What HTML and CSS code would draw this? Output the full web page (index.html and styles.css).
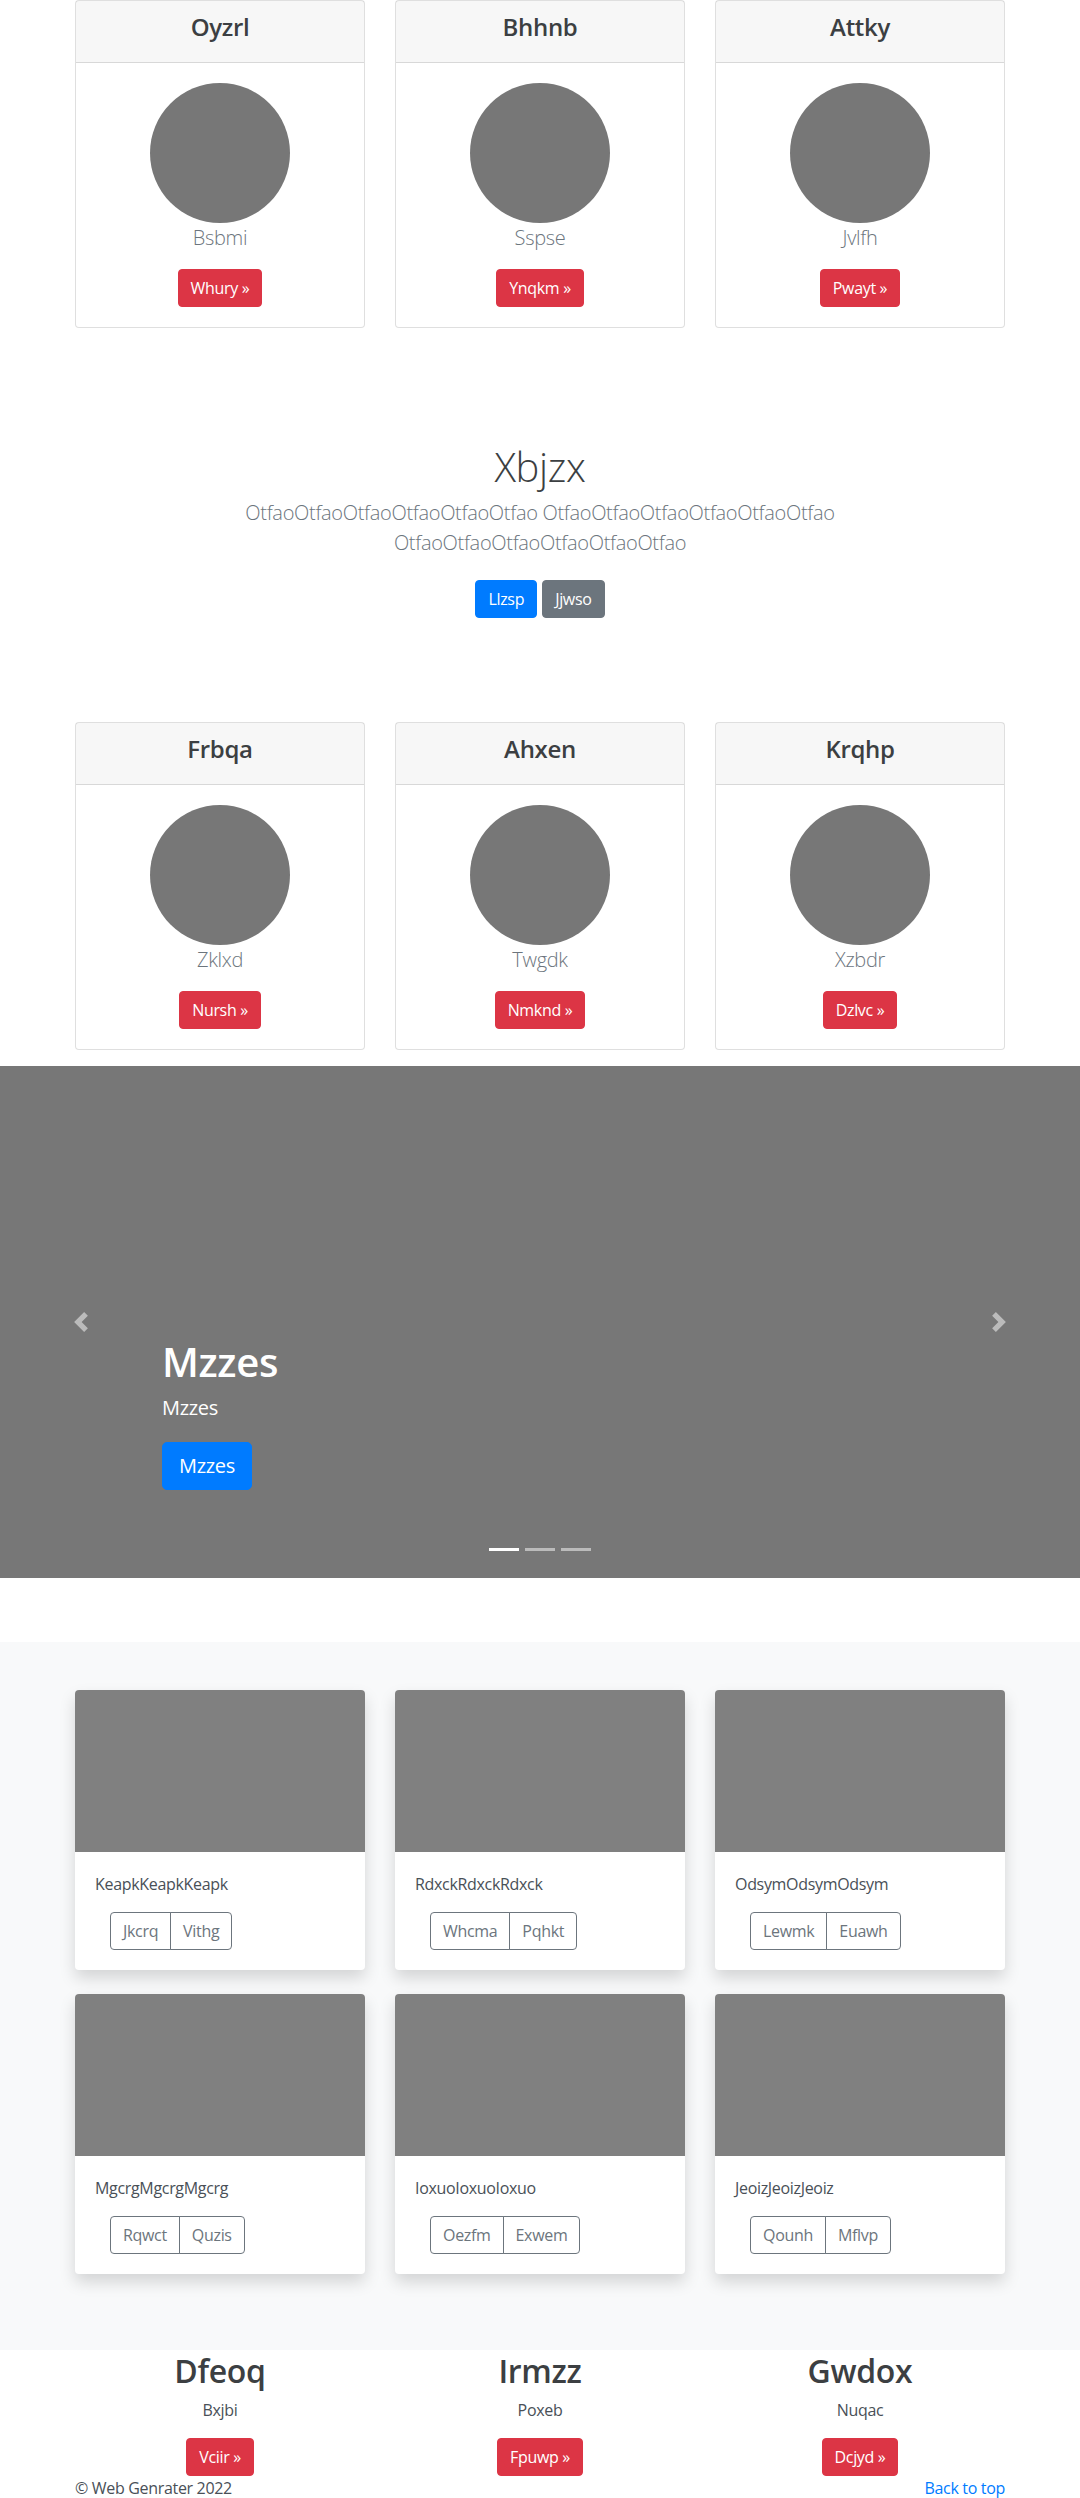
FILE: index.html
```html
<!DOCTYPE html>
<html lang="en">
<head>
    <meta charset="UTF-8">
    <meta name="viewport" content="width=device-width, initial-scale=1.0">
    <title>Web Genrater</title>
    <link rel="stylesheet" href="styles.css">
</head>
<body>
    <div class="container">
        <div class="row">
            <div class="card">
                <div class="card-header"><h4>Oyzrl</h4></div>
                <div class="card-body">
                    <div class="avatar"></div>
                    <p class="lead">Bsbmi</p>
                    <a href="#" class="btn btn-danger">Whury &raquo;</a>
                </div>
            </div>
            <div class="card">
                <div class="card-header"><h4>Bhhnb</h4></div>
                <div class="card-body">
                    <div class="avatar"></div>
                    <p class="lead">Sspse</p>
                    <a href="#" class="btn btn-danger">Ynqkm &raquo;</a>
                </div>
            </div>
            <div class="card">
                <div class="card-header"><h4>Attky</h4></div>
                <div class="card-body">
                    <div class="avatar"></div>
                    <p class="lead">Jvlfh</p>
                    <a href="#" class="btn btn-danger">Pwayt &raquo;</a>
                </div>
            </div>
        </div>
    </div>

    <section class="jumbotron">
        <div class="jumbotron-inner">
            <h1>Xbjzx</h1>
            <p class="lead">OtfaoOtfaoOtfaoOtfaoOtfaoOtfao OtfaoOtfaoOtfaoOtfaoOtfaoOtfao OtfaoOtfaoOtfaoOtfaoOtfaoOtfao</p>
            <p class="actions">
                <a href="#" class="btn btn-primary">Llzsp</a>
                <a href="#" class="btn btn-secondary">Jjwso</a>
            </p>
        </div>
    </section>

    <div class="container">
        <div class="row">
            <div class="card">
                <div class="card-header"><h4>Frbqa</h4></div>
                <div class="card-body">
                    <div class="avatar"></div>
                    <p class="lead">Zklxd</p>
                    <a href="#" class="btn btn-danger">Nursh &raquo;</a>
                </div>
            </div>
            <div class="card">
                <div class="card-header"><h4>Ahxen</h4></div>
                <div class="card-body">
                    <div class="avatar"></div>
                    <p class="lead">Twgdk</p>
                    <a href="#" class="btn btn-danger">Nmknd &raquo;</a>
                </div>
            </div>
            <div class="card">
                <div class="card-header"><h4>Krqhp</h4></div>
                <div class="card-body">
                    <div class="avatar"></div>
                    <p class="lead">Xzbdr</p>
                    <a href="#" class="btn btn-danger">Dzlvc &raquo;</a>
                </div>
            </div>
        </div>
    </div>

    <div class="carousel">
        <a href="#" class="carousel-control prev">
            <svg width="20" height="20" viewBox="0 0 8 8"><path fill="#fff" d="M5.25 0l-4 4 4 4 1.5-1.5L4.25 4l2.5-2.5L5.25 0z"/></svg>
        </a>
        <div class="carousel-caption">
            <h1>Mzzes</h1>
            <p>Mzzes</p>
            <a href="#" class="btn btn-primary btn-lg">Mzzes</a>
        </div>
        <a href="#" class="carousel-control next">
            <svg width="20" height="20" viewBox="0 0 8 8"><path fill="#fff" d="M2.75 0l-1.5 1.5L3.75 4l-2.5 2.5L2.75 8l4-4-4-4z"/></svg>
        </a>
        <ol class="carousel-indicators">
            <li class="active"></li>
            <li></li>
            <li></li>
        </ol>
    </div>

    <div class="album">
        <div class="container">
            <div class="row">
                <div class="album-card">
                    <div class="thumb"></div>
                    <div class="album-body">
                        <p>KeapkKeapkKeapk</p>
                        <div class="btn-group">
                            <a href="#" class="btn btn-outline">Jkcrq</a>
                            <a href="#" class="btn btn-outline">Vithg</a>
                        </div>
                    </div>
                </div>
                <div class="album-card">
                    <div class="thumb"></div>
                    <div class="album-body">
                        <p>RdxckRdxckRdxck</p>
                        <div class="btn-group">
                            <a href="#" class="btn btn-outline">Whcma</a>
                            <a href="#" class="btn btn-outline">Pqhkt</a>
                        </div>
                    </div>
                </div>
                <div class="album-card">
                    <div class="thumb"></div>
                    <div class="album-body">
                        <p>OdsymOdsymOdsym</p>
                        <div class="btn-group">
                            <a href="#" class="btn btn-outline">Lewmk</a>
                            <a href="#" class="btn btn-outline">Euawh</a>
                        </div>
                    </div>
                </div>
                <div class="album-card">
                    <div class="thumb"></div>
                    <div class="album-body">
                        <p>MgcrgMgcrgMgcrg</p>
                        <div class="btn-group">
                            <a href="#" class="btn btn-outline">Rqwct</a>
                            <a href="#" class="btn btn-outline">Quzis</a>
                        </div>
                    </div>
                </div>
                <div class="album-card">
                    <div class="thumb"></div>
                    <div class="album-body">
                        <p>IoxuoIoxuoIoxuo</p>
                        <div class="btn-group">
                            <a href="#" class="btn btn-outline">Oezfm</a>
                            <a href="#" class="btn btn-outline">Exwem</a>
                        </div>
                    </div>
                </div>
                <div class="album-card">
                    <div class="thumb"></div>
                    <div class="album-body">
                        <p>JeoizJeoizJeoiz</p>
                        <div class="btn-group">
                            <a href="#" class="btn btn-outline">Qounh</a>
                            <a href="#" class="btn btn-outline">Mflvp</a>
                        </div>
                    </div>
                </div>
            </div>
        </div>
    </div>

    <div class="container">
        <div class="row">
            <div class="feature">
                <h2>Dfeoq</h2>
                <p>Bxjbi</p>
                <p class="feature-link"><a href="#" class="btn btn-danger">Vciir &raquo;</a></p>
            </div>
            <div class="feature">
                <h2>Irmzz</h2>
                <p>Poxeb</p>
                <p class="feature-link"><a href="#" class="btn btn-danger">Fpuwp &raquo;</a></p>
            </div>
            <div class="feature">
                <h2>Gwdox</h2>
                <p>Nuqac</p>
                <p class="feature-link"><a href="#" class="btn btn-danger">Dcjyd &raquo;</a></p>
            </div>
        </div>
    </div>

    <footer class="container footer">
        <p>&copy; Web Genrater 2022</p>
        <p><a href="#">Back to top</a></p>
    </footer>
</body>
</html>
```

FILE: styles.css
```css
* {
    box-sizing: border-box;
}

body {
    margin: 0;
    font-family: "Segoe UI", "Open Sans", Arial, sans-serif;
    font-size: 16px;
    line-height: 1.5;
    letter-spacing: -0.02em;
    color: #212529;
    background: #fff;
}

a {
    color: #007bff;
    text-decoration: none;
}

.container {
    width: 960px;
    margin: 0 auto;
    padding: 0 15px;
}

.row {
    display: grid;
    grid-template-columns: repeat(3, 1fr);
    column-gap: 30px;
}

/* buttons */
.btn {
    display: inline-block;
    padding: 6px 12px;
    font-size: 16px;
    line-height: 24px;
    border: 1px solid transparent;
    border-radius: 4px;
    color: #fff;
}

.btn-danger {
    background: #dc3545;
    border-color: #dc3545;
}

.btn-primary {
    background: #007bff;
    border-color: #007bff;
}

.btn-secondary {
    background: #6c757d;
    border-color: #6c757d;
}

.btn-lg {
    padding: 8px 16px;
    font-size: 20px;
    line-height: 30px;
    border-radius: 5px;
}

.btn-outline {
    color: #6c757d;
    border-color: #6c757d;
    background: transparent;
}

/* profile cards */
.card {
    border: 1px solid rgba(0, 0, 0, .125);
    border-radius: 4px;
    text-align: center;
    background: #fff;
}

.card-header {
    padding: 12px 20px;
    background: rgba(0, 0, 0, .03);
    border-bottom: 1px solid rgba(0, 0, 0, .125);
}

.card-header h4 {
    margin: 0 0 8px;
    font-size: 24px;
    font-weight: 600;
    line-height: 1.2;
    color: #3c3f42;
}

.card-body {
    padding: 20px;
}

.avatar {
    width: 140px;
    height: 140px;
    margin: 0 auto;
    border-radius: 50%;
    background: #777;
}

.lead {
    margin: 0 0 16px;
    font-size: 20px;
    font-weight: 300;
    line-height: 30px;
    color: #6c757d;
}

/* jumbotron */
.jumbotron {
    padding: 115px 0 104px;
    text-align: center;
}

.jumbotron-inner {
    max-width: 640px;
    margin: 0 auto;
    padding: 0 15px;
}

.jumbotron h1 {
    margin: 0 0 7px;
    font-size: 40px;
    font-weight: 300;
    line-height: 48px;
    color: #3c3f42;
}

.actions {
    display: flex;
    justify-content: center;
    gap: 5px;
    margin: 22px 0 0;
}

/* carousel */
.carousel {
    position: relative;
    height: 512px;
    margin: 16px 0 64px;
    background: #777;
}

.carousel-control {
    position: absolute;
    top: 0;
    bottom: 0;
    width: 15%;
    display: flex;
    align-items: center;
    justify-content: center;
    opacity: .5;
}

.carousel-control.prev {
    left: 0;
}

.carousel-control.next {
    right: 0;
}

.carousel-caption {
    position: absolute;
    left: 15%;
    right: 15%;
    bottom: 88px;
    color: #fff;
}

.carousel-caption h1 {
    margin: 0 0 7px;
    font-size: 40px;
    font-weight: 600;
    line-height: 48px;
}

.carousel-caption p {
    margin: 0 0 19px;
    font-size: 20px;
    line-height: 30px;
}

.carousel-indicators {
    position: absolute;
    left: 0;
    right: 0;
    bottom: 27px;
    display: flex;
    justify-content: center;
    margin: 0;
    padding: 0;
    list-style: none;
}

.carousel-indicators li {
    width: 30px;
    height: 3px;
    margin: 0 3px;
    background: #fff;
    opacity: .5;
}

.carousel-indicators li.active {
    opacity: 1;
}

/* album */
.album {
    padding: 48px 0 52px;
    background: #f8f9fa;
}

.album-card {
    margin-bottom: 24px;
    background: #fff;
    border-radius: 4px;
    overflow: hidden;
    box-shadow: 0 8px 16px rgba(0, 0, 0, .15);
}

.thumb {
    height: 162px;
    background: #808080;
}

.album-body {
    padding: 20px;
}

.album-body p {
    margin: 0 0 16px;
    color: #495057;
}

.btn-group {
    display: inline-flex;
    margin-left: 15px;
}

.btn-group .btn:first-child {
    border-top-right-radius: 0;
    border-bottom-right-radius: 0;
}

.btn-group .btn + .btn {
    margin-left: -1px;
    border-top-left-radius: 0;
    border-bottom-left-radius: 0;
}

/* features */
.feature {
    text-align: center;
}

.feature h2 {
    margin: 2px 0 8px;
    font-size: 32px;
    font-weight: 600;
    line-height: 1.2;
    color: #3c3f42;
}

.feature p {
    margin: 0 0 16px;
    color: #495057;
}

.feature .feature-link {
    margin: 0;
}

.footer {
    display: flex;
    justify-content: space-between;
}

.footer p {
    margin: 0;
    color: #495057;
}
```
